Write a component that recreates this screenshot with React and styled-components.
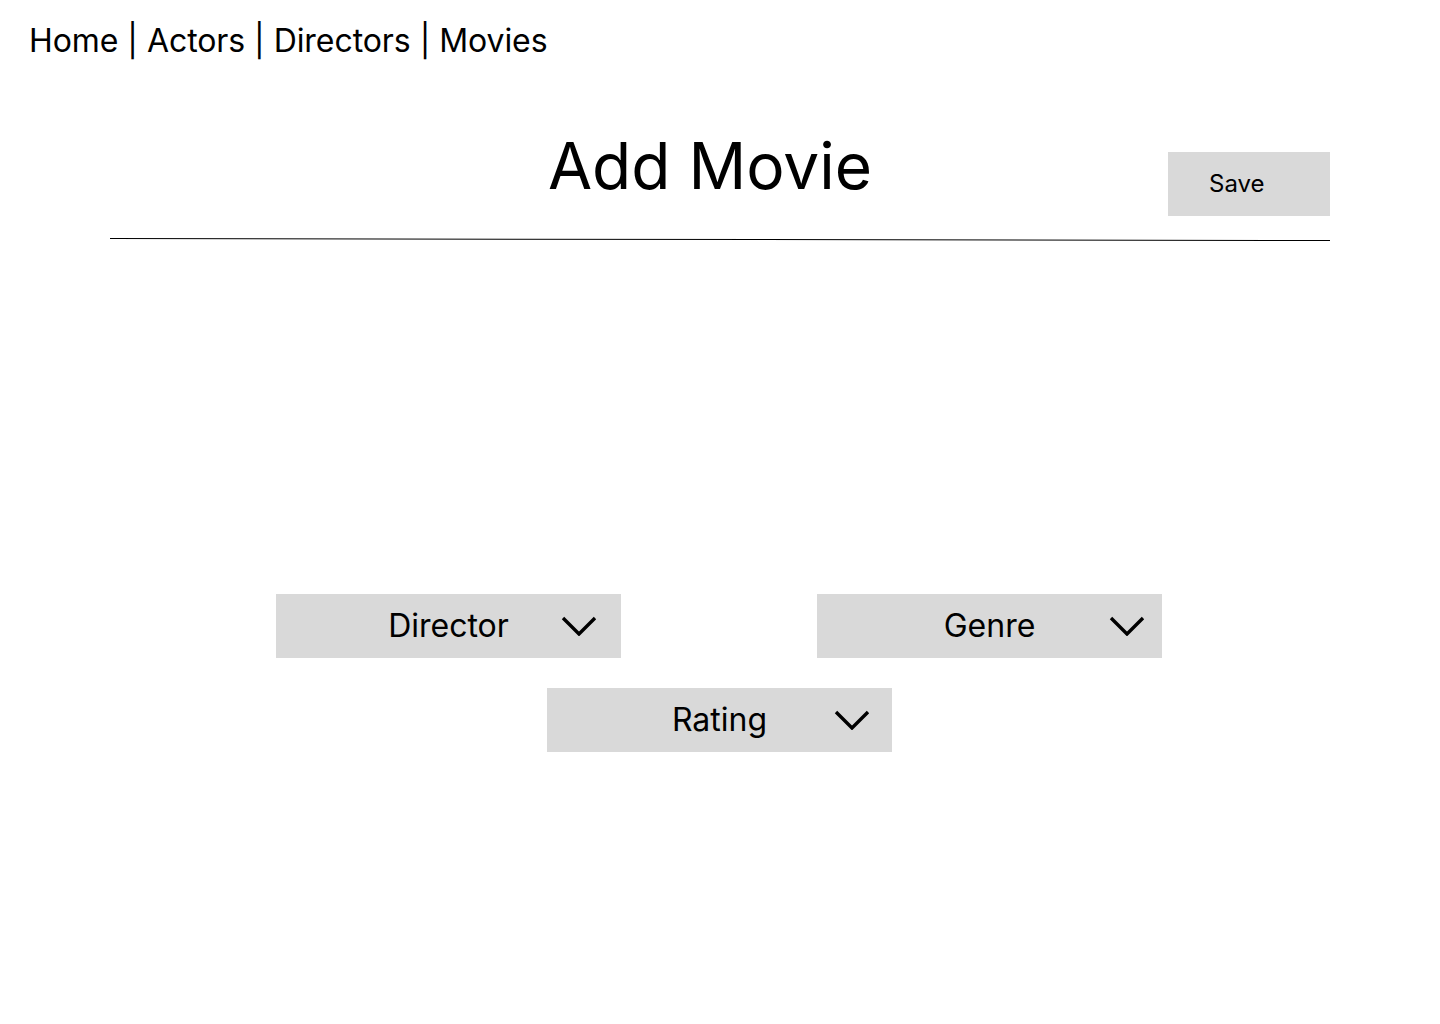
import styled, { createGlobalStyle } from 'styled-components';

const GlobalStyle = createGlobalStyle`
  body {
    margin: 0;
    background: #fff;
    color: #000;
    font-family: Inter, 'Noto Sans', sans-serif;
  }
`;

const Page = styled.div`
  min-height: 1024px;
`;

const Nav = styled.nav`
  display: flex;
  padding: 21px 0 0 29px;
  font-size: 32px;
  letter-spacing: -0.06px;
  white-space: pre;
`;

const NavLink = styled.a`
  color: inherit;
  text-decoration: none;
`;

const Container = styled.div`
  width: 1220px;
  margin-inline: auto;
`;

const Header = styled.header`
  display: grid;
  grid-template-columns: 1fr auto 1fr;
  margin-top: 67px;
`;

const Title = styled.h1`
  grid-column: 2;
  margin: 0 20px 0 0;
  font-size: 64px;
  font-weight: 400;
  line-height: normal;
`;

const SaveButton = styled.button`
  grid-column: 3;
  justify-self: end;
  align-self: start;
  margin-top: 25px;
  width: 162px;
  height: 64px;
  padding: 0 0 2px 41px;
  border: none;
  background: #d9d9d9;
  font-family: inherit;
  font-size: 24px;
  text-align: left;
  color: #000;
  cursor: pointer;
`;

const Divider = styled.hr`
  margin: 23px 0 0;
  height: 1px;
  border: none;
  background: #000;
  transform: rotate(0.094deg);
`;

const Fields = styled.div`
  display: flex;
  flex-direction: column;
  align-items: center;
  row-gap: 30px;
  margin-top: 354px;
  padding-right: 1px;
`;

const Row = styled.div`
  display: flex;
  justify-content: center;
  column-gap: 196px;
  margin-right: 1px;
`;

const Select = styled.div`
  position: relative;
  display: flex;
  align-items: center;
  justify-content: center;
  width: 345px;
  height: 64px;
  padding-bottom: 2px;
  box-sizing: border-box;
  background: #d9d9d9;
  font-size: 32px;
  cursor: pointer;
`;

const Chevron = styled.svg`
  position: absolute;
  top: 22px;
  right: ${(p) => p.$right}px;
`;

function Dropdown({ label, chevronRight = 24 }) {
  return (
    <Select>
      {label}
      <Chevron $right={chevronRight} width="36" height="20" viewBox="0 0 36 20" fill="none">
        <polyline points="2,2 18,18 34,2" stroke="#000" strokeWidth="3.4" />
      </Chevron>
    </Select>
  );
}

const links = ['Home', 'Actors', 'Directors', 'Movies'];

export default function App() {
  return (
    <Page>
      <GlobalStyle />
      <Nav>
        {links.map((l, i) => (
          <span key={l}>
            <NavLink href="#">{l}</NavLink>
            {i < links.length - 1 ? ' | ' : ''}
          </span>
        ))}
      </Nav>
      <Container>
        <Header>
          <Title>Add Movie</Title>
          <SaveButton>Save</SaveButton>
        </Header>
        <Divider />
        <Fields>
          <Row>
            <Dropdown label="Director" chevronRight={24} />
            <Dropdown label="Genre" chevronRight={17} />
          </Row>
          <Dropdown label="Rating" chevronRight={22} />
        </Fields>
      </Container>
    </Page>
  );
}
